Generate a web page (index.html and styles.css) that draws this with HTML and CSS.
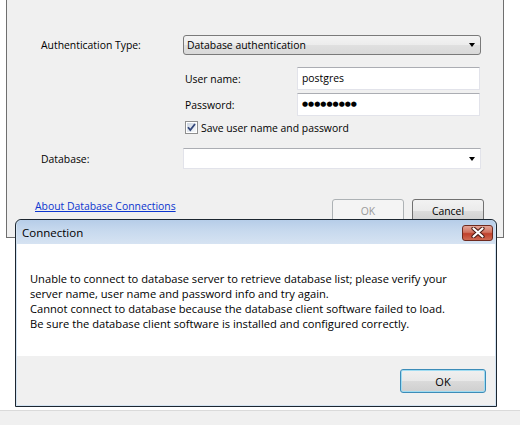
FILE: index.html
```html
<!DOCTYPE html>
<html>
<head>
<meta charset="utf-8">
<link rel="stylesheet" href="styles.css">
</head>
<body>
<div class="screen">
  <div class="desktop">
    <div class="win back">
      <div class="row auth">
        <span class="lbl">Authentication Type:</span>
        <div class="combo dd"><span>Database authentication</span><i class="arrow"></i></div>
      </div>
      <div class="cred">
        <div class="crow"><span class="clbl">User name:</span><div class="input">postgres</div></div>
        <div class="crow pwrow"><span class="clbl">Password:</span><div class="input pw">●●●●●●●●●</div></div>
        <div class="chk">
          <svg class="box" width="13" height="13" viewBox="0 0 13 13">
            <defs>
              <linearGradient id="cbg" x1="0" y1="0" x2="1" y2="1">
                <stop offset="0" stop-color="#cdd6e2"/>
                <stop offset="1" stop-color="#f7f9fb"/>
              </linearGradient>
            </defs>
            <rect x="0.5" y="0.5" width="12" height="12" fill="#fff" stroke="#8f8f8f"/>
            <rect x="2" y="2" width="9" height="9" fill="url(#cbg)"/>
            <path d="M3 6.2 L5.3 9 L10 3" fill="none" stroke="#34477b" stroke-width="1.8"/>
          </svg>
          <span>Save user name and password</span>
        </div>
      </div>
      <div class="row db">
        <span class="lbl">Database:</span>
        <div class="combo edit"><span></span><i class="arrow"></i></div>
      </div>
      <div class="foot">
        <a class="link" href="#">About Database Connections</a>
        <div class="btns">
          <div class="btn disabled">OK</div>
          <div class="btn">Cancel</div>
        </div>
      </div>
    </div>

    <div class="win msg">
      <div class="title">
        <span class="ttext">Connection</span>
        <div class="close">
          <svg width="14" height="11" viewBox="0 0 14 11">
            <path d="M2.5 1.5 L11.5 9.5 M11.5 1.5 L2.5 9.5" stroke="#4b1a12" stroke-width="4.2" stroke-linecap="round"/>
            <path d="M2.5 1.5 L11.5 9.5 M11.5 1.5 L2.5 9.5" stroke="#ffffff" stroke-width="2.2" stroke-linecap="round"/>
          </svg>
        </div>
      </div>
      <div class="mbody">
        <p>Unable to connect to database server to retrieve database list; please verify your<br>server name, user name and password info and try again.<br>Cannot connect to database because the database client software failed to load.<br>Be sure the database client software is installed and configured correctly.</p>
      </div>
      <div class="mfoot">
        <div class="okbtn">OK</div>
      </div>
    </div>
  </div>
  <div class="strip"></div>
</div>
</body>
</html>
```

FILE: styles.css
```css
* { box-sizing: border-box; }

html, body {
  margin: 0;
  padding: 0;
  background: #ffffff;
}

body {
  font-family: "Open Sans", "Liberation Sans", sans-serif;
  font-size: 11px;
  color: #000;
}

.screen {
  width: 520px;
  height: 425px;
  display: flex;
  flex-direction: column;
  overflow: hidden;
}

.desktop {
  position: relative;
  height: 410px;
  flex: none;
}

.strip {
  flex: 1;
  border-top: 1px solid #dadada;
  background: #f0f0f0;
}

.win {
  position: absolute;
}

/* background dialog */
.back {
  left: 6px;
  top: 0;
  width: 498px;
  height: 238px;
  background: #f0f0f0;
  border: 1px solid #6f6f6f;
  border-top: none;
  padding: 35px 22px 0 34px;
  display: flex;
  flex-direction: column;
  font-size: 10.4px;
}

.row {
  display: flex;
  align-items: center;
}

.lbl {
  width: 142px;
  flex: none;
}

.combo {
  width: 298px;
  display: flex;
  align-items: center;
  justify-content: space-between;
  padding: 0 5px 0 3px;
}

.dd {
  height: 20px;
  border: 1px solid #7a7a7a;
  border-radius: 3px;
  background: linear-gradient(#f4f4f4, #ececec 50%, #e0e0e0 51%, #d9d9d9);
}

.edit {
  height: 21px;
  border: 1px solid #e2e3ea;
  border-top-color: #abadb3;
  background: #ffffff;
}

.arrow {
  width: 0;
  height: 0;
  border-left: 3.5px solid transparent;
  border-right: 3.5px solid transparent;
  border-top: 4px solid #000;
}

.cred {
  margin: 12px 0 0 142px;
  padding-left: 2px;
}

.crow {
  display: flex;
  align-items: center;
  height: 23px;
}

.pwrow {
  margin-top: 3px;
}

.clbl {
  width: 112px;
  flex: none;
}

.input {
  width: 183px;
  height: 23px;
  border: 1px solid #e2e3ea;
  border-top-color: #abadb3;
  background: #fff;
  padding: 3px 0 0 4px;
}

.pw {
  font-size: 7px;
  letter-spacing: 0;
  padding: 6px 0 0 4px;
  font-family: "DejaVu Sans", sans-serif;
}

.chk {
  margin-top: 4px;
  height: 15px;
  display: flex;
  align-items: center;
  gap: 3px;
}

.box {
  display: block;
  flex: none;
}

.db {
  margin-top: 13px;
}

.foot {
  margin: 30px -3px 0 -6px;
  display: flex;
  justify-content: space-between;
  align-items: flex-start;
}

.link {
  color: #0b35cf;
  text-decoration: underline;
  margin-top: 0px;
}

.btns {
  display: flex;
  gap: 8px;
}

.btn {
  width: 72px;
  height: 23px;
  border: 1px solid #707070;
  border-radius: 3px;
  background: linear-gradient(#f2f2f2, #ebebeb 50%, #dddddd 51%, #cfcfcf);
  display: flex;
  align-items: center;
  justify-content: center;
  padding-top: 1px;
}

.btn.disabled {
  border-color: #adb2b5;
  background: #f4f4f4;
  color: #9a9a9a;
}

/* message dialog */
.msg {
  left: 15px;
  top: 219px;
  width: 482px;
  height: 188px;
  border: 1px solid #1c2630;
  border-radius: 6px 6px 0 0;
  background: #bcd6ec;
  padding: 0 1px 1px 1px;
  display: flex;
  flex-direction: column;
  box-shadow: inset 0 0 0 1px #d3e3f2;
}

.title {
  height: 24px;
  flex: none;
  display: flex;
  align-items: center;
  justify-content: space-between;
  padding: 0 2px 0 5px;
  border-radius: 5px 5px 0 0;
  background: linear-gradient(#b6cde8, #c7d9ee 45%, #d6e3f2);
}

.ttext {
  font-size: 11.5px;
  color: #000;
}

.close {
  width: 31px;
  height: 16px;
  margin-top: 1px;
  border: 1px solid #6e2a1f;
  border-radius: 3px;
  background: linear-gradient(#e3a598, #d1725f 45%, #c0402c 55%, #cf6a52);
  display: flex;
  align-items: center;
  justify-content: center;
}

.close svg {
  display: block;
}

.mbody {
  height: 112px;
  flex: none;
  background: #ffffff;
  padding: 27px 0 0 13px;
  font-size: 11.15px;
}

.mbody p {
  margin: 0;
  line-height: 15px;
}

.mfoot {
  flex: 1;
  background: #f0f0f0;
  display: flex;
  justify-content: flex-end;
  align-items: flex-start;
  padding: 13px 9px 0 0;
}

.okbtn {
  width: 86px;
  height: 24px;
  border: 1px solid #3c8cb8;
  border-radius: 3px;
  box-shadow: inset 0 0 0 1px #9fdcf2;
  background: linear-gradient(#f0f0f0, #e8e8e8 50%, #dadada 51%, #cfcfcf);
  display: flex;
  align-items: center;
  justify-content: center;
  padding-top: 1px;
}
```
